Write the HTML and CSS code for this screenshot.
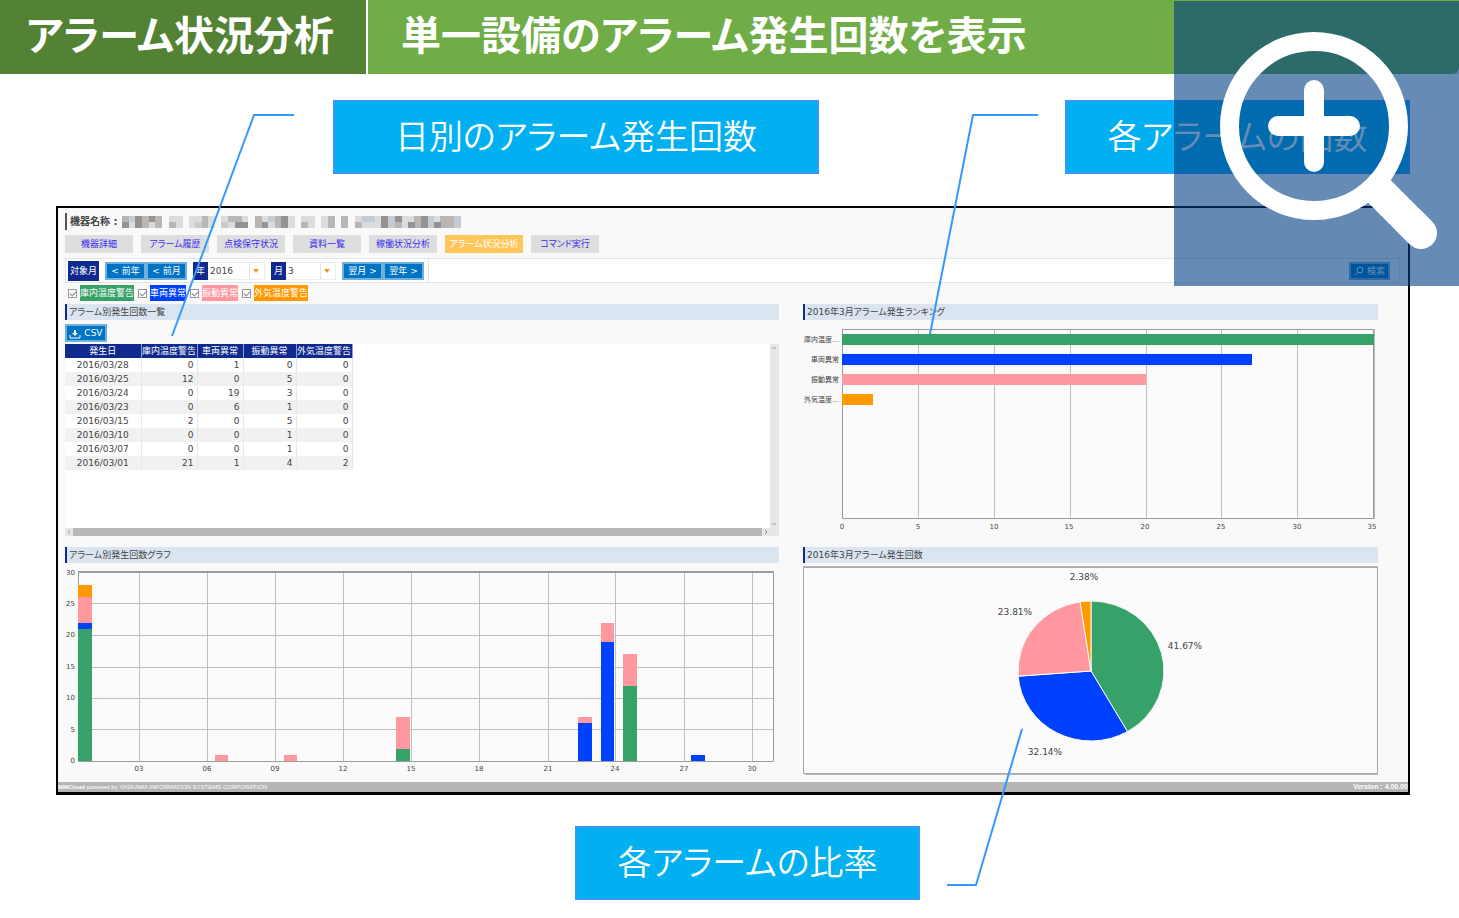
FILE: index.html
```html
<!DOCTYPE html>
<html lang="ja">
<head>
<meta charset="utf-8">
<title>アラーム状況分析</title>
<link rel="stylesheet" href="styles.css">
</head>
<body>
<div class="slide">
  <header class="banner">
    <h1 class="banner-title">アラーム状況分析</h1>
    <p class="banner-lead">単一設備のアラーム発生回数を表示</p>
  </header>

  <div class="callouts callouts-top">
    <p class="callout callout-wide">日別のアラーム発生回数</p>
    <p class="callout">各アラームの回数</p>
  </div>

  <main class="app">
    <div class="device">
      <h2 class="device-label">機器名称 :</h2>
      <svg class="mosaic" viewBox="0 0 340 12" width="340" height="12" aria-hidden="true">
        <path fill="#dcdcdc" d="M0 0h40v12H0zM47 0h14v12H47zM67 0h26v12H67zM99 0h27v12H99zM133 0h40v12h-40zM179 0h14v12h-14zM199 0h14v12h-14zM219 0h7v12h-7zM233 0h106v12H233z"/>
        <path fill="#b9b6b3" d="M0 0h7v12H0zM20 0h7v12h-7zM33 0h7v12h-7zM47 6h7v6h-7zM80 0h6v12h-6zM106 0h14v6h-14zM133 0h7v12h-7zM153 0h6v12h-6zM179 6h7v6h-7zM206 0h7v12h-7zM219 0h7v12h-7zM233 6h7v6h-7zM273 0h7v12h-7zM292 0h7v12h-7zM318 0h14v12h-14z"/>
        <path fill="#949391" d="M0 6h7v6H0zM13 0h7v12h-7zM27 0h6v6h-6zM113 6h13v6h-13zM140 6h6v6h-6zM159 0h7v12h-7zM259 0h7v12h-7zM273 0h7v6h-7zM286 6h7v6h-7zM299 0h7v12h-7zM312 6h7v6h-7z"/>
        <path fill="#c5cbd3" d="M7 0h6v6H7zM73 6h7v6h-7zM99 6h7v6h-7zM146 0h7v6h-7zM240 0h13v6h-13zM266 0h7v12h-7zM306 0h6v12h-6zM332 0h7v12h-7z"/>
      </svg>
    </div>

    <nav class="tabs">
      <a class="tab" href="#">機器詳細</a>
      <a class="tab" href="#">アラーム履歴</a>
      <a class="tab" href="#">点検保守状況</a>
      <a class="tab" href="#">資料一覧</a>
      <a class="tab" href="#">稼働状況分析</a>
      <a class="tab tab-active" href="#">アラーム状況分析</a>
      <a class="tab" href="#">コマンド実行</a>
    </nav>

    <form class="toolbar">
      <div class="period">
        <span class="tag tag-tall">対象月</span>
        <span class="pair">
          <button class="btn" type="button">&lt; 前年</button>
          <button class="btn" type="button">&lt; 前月</button>
        </span>
        <span class="field">
          <label class="tag" for="year">年</label>
          <span class="picker"><select id="year"><option>2016</option></select></span>
        </span>
        <span class="field">
          <label class="tag" for="month">月</label>
          <span class="picker picker-short"><select id="month"><option>3</option></select></span>
        </span>
        <span class="pair">
          <button class="btn" type="button">翌月 &gt;</button>
          <button class="btn" type="button">翌年 &gt;</button>
        </span>
      </div>
      <button class="btn btn-search" type="button">
        <svg viewBox="0 0 10 10" width="10" height="10" aria-hidden="true"><path d="M3.6 6.4L1 9.2M3 4a3 3 0 1 1 6 0a3 3 0 0 1-6 0" fill="none" stroke="#fff" stroke-width="1"/></svg>
        検索
      </button>
    </form>

    <div class="filters">
      <input class="check" type="checkbox" id="f1" checked><label class="chip green" for="f1">庫内温度警告</label>
      <input class="check" type="checkbox" id="f2" checked><label class="chip blue" for="f2">車両異常</label>
      <input class="check" type="checkbox" id="f3" checked><label class="chip pink" for="f3">振動異常</label>
      <input class="check" type="checkbox" id="f4" checked><label class="chip orange" for="f4">外気温度警告</label>
    </div>

    <div class="panels">
      <section class="panel">
        <h3 class="panel-title">アラーム別発生回数一覧</h3>
        <button class="btn btn-csv" type="button">
          <svg viewBox="0 0 12 10" width="12" height="10" aria-hidden="true"><path d="M1 6v3h10V6" fill="none" stroke="#fff"/><path d="M5 1h2v3h2L6 7L3 4h2z" fill="#fff"/></svg>
          CSV
        </button>
        <div class="list">
          <div class="list-body">
            <table class="log">
              <colgroup><col class="c-day"><col class="c-a"><col class="c-b"><col class="c-c"><col class="c-d"></colgroup>
              <thead><tr><th>発生日</th><th>庫内温度警告</th><th>車両異常</th><th>振動異常</th><th>外気温度警告</th></tr></thead>
              <tbody>
                <tr><td>2016/03/28</td><td>0</td><td>1</td><td>0</td><td>0</td></tr>
                <tr><td>2016/03/25</td><td>12</td><td>0</td><td>5</td><td>0</td></tr>
                <tr><td>2016/03/24</td><td>0</td><td>19</td><td>3</td><td>0</td></tr>
                <tr><td>2016/03/23</td><td>0</td><td>6</td><td>1</td><td>0</td></tr>
                <tr><td>2016/03/15</td><td>2</td><td>0</td><td>5</td><td>0</td></tr>
                <tr><td>2016/03/10</td><td>0</td><td>0</td><td>1</td><td>0</td></tr>
                <tr><td>2016/03/07</td><td>0</td><td>0</td><td>1</td><td>0</td></tr>
                <tr><td>2016/03/01</td><td>21</td><td>1</td><td>4</td><td>2</td></tr>
              </tbody>
            </table>
          </div>
          <div class="vbar">
            <svg viewBox="0 0 8 8" width="8" height="8" aria-hidden="true"><path d="M2 5l2-2l2 2" fill="none" stroke="#aaa"/></svg>
            <svg viewBox="0 0 8 8" width="8" height="8" aria-hidden="true"><path d="M2 3l2 2l2-2" fill="none" stroke="#aaa"/></svg>
          </div>
          <div class="hbar">
            <svg viewBox="0 0 8 8" width="8" height="8" aria-hidden="true"><path d="M5 2L3 4l2 2" fill="none" stroke="#aaa"/></svg>
            <span class="thumb"></span>
            <svg viewBox="0 0 8 8" width="8" height="8" aria-hidden="true"><path d="M3 2l2 2l-2 2" fill="none" stroke="#888"/></svg>
          </div>
        </div>
      </section>

      <section class="panel">
        <h3 class="panel-title">2016年3月アラーム発生ランキング</h3>
        <svg class="chart chart-rank" viewBox="0 0 575 212">
          <rect x="39" y="5" width="532" height="190" fill="#fbfbfb"/>
          <path class="grid" d="M115.500 5v190M191.500 5v190M267.500 5v190M343.500 5v190M418.500 5v190M494.500 5v190"/>
          <path class="frame" d="M39.500 5.500h531v189h-531z"/>
          <path class="shade" d="M571.500 5v190"/>
          <rect class="f-green" x="39" y="10" width="532" height="11"/>
          <rect class="f-blue" x="39" y="30" width="410" height="11"/>
          <rect class="f-pink" x="39" y="50" width="304" height="11"/>
          <rect class="f-orange" x="39" y="70" width="31" height="11"/>
          <g class="axis end">
            <text x="36" y="18">庫内温度…</text>
            <text x="36" y="38">車両異常</text>
            <text x="36" y="58">振動異常</text>
            <text x="36" y="78">外気温度…</text>
          </g>
          <g class="axis mid">
            <text x="39" y="205">0</text><text x="115" y="205">5</text><text x="191" y="205">10</text><text x="266" y="205">15</text><text x="342" y="205">20</text><text x="418" y="205">25</text><text x="494" y="205">30</text><text x="569" y="205">35</text>
          </g>
        </svg>
      </section>

      <section class="panel">
        <h3 class="panel-title">アラーム別発生回数グラフ</h3>
        <svg class="chart" viewBox="0 0 714 213">
          <rect x="13" y="9" width="695" height="189" fill="#fbfbfb"/>
          <path class="grid" d="M13 40.500h695M13 72.500h695M13 104.500h695M13 135.500h695M13 166.500h695M74.500 9v189M142.500 9v189M210.500 9v189M278.500 9v189M346.500 9v189M414.500 9v189M483.500 9v189M550.500 9v189M619.500 9v189M687.500 9v189"/>
          <path class="frame" d="M13.500 9.500h695v189h-695zM13 8.500h696"/>
          <path class="f-orange" d="M13 22h14v12H13z"/>
          <path class="f-pink" d="M13 34h14v26H13zM150 192h13v6h-13zM219 192h13v6h-13zM331 154h14v32h-14zM513 154h14v6h-14zM536 60h13v19h-13zM558 91h14v32h-14z"/>
          <path class="f-blue" d="M13 60h14v6H13zM513 160h14v38h-14zM536 79h13v119h-13zM626 192h14v6h-14z"/>
          <path class="f-green" d="M13 66h14v132H13zM331 186h14v12h-14zM558 123h14v75h-14z"/>
          <g class="axis end">
            <text x="10" y="12">30</text><text x="10" y="43">25</text><text x="10" y="74">20</text><text x="10" y="106">15</text><text x="10" y="137">10</text><text x="10" y="169">5</text><text x="10" y="200">0</text>
          </g>
          <g class="axis mid">
            <text x="74" y="208">03</text><text x="142" y="208">06</text><text x="210" y="208">09</text><text x="278" y="208">12</text><text x="346" y="208">15</text><text x="414" y="208">18</text><text x="483" y="208">21</text><text x="550" y="208">24</text><text x="619" y="208">27</text><text x="687" y="208">30</text>
          </g>
        </svg>
      </section>

      <section class="panel">
        <h3 class="panel-title">2016年3月アラーム発生回数</h3>
        <svg class="chart" viewBox="0 0 575 213">
          <rect x="0.500" y="4.500" width="574" height="206" fill="#fbfbfb" stroke="#a9a9a9"/>
          <path class="shade" d="M0 3.500h575M2 211.500h573"/>
          <g stroke="#fbfbfb" stroke-width="1">
            <path class="f-green" d="M288 108V38A73 70 0 0 1 324.500 168.600z"/>
            <path class="f-blue" d="M288 108L324.500 168.600A73 70 0 0 1 215.200 113.200z"/>
            <path class="f-pink" d="M288 108L215.200 113.200A73 70 0 0 1 277.100 38.800z"/>
            <path class="f-orange" d="M288 108L277.100 38.800A73 70 0 0 1 288 38z"/>
          </g>
          <g class="share mid">
            <text x="281" y="17">2.38%</text>
            <text x="212" y="52">23.81%</text>
            <text x="382" y="86">41.67%</text>
            <text x="242" y="192">32.14%</text>
          </g>
        </svg>
      </section>
    </div>

    <footer class="foot">
      <span><b>MMCloud</b> powered by YASKAWA INFORMATION SYSTEMS CORPORATION</span>
      <b class="version">Version : 4.00.00</b>
    </footer>
  </main>

  <div class="callouts callouts-bottom">
    <p class="callout">各アラームの比率</p>
  </div>

  <svg class="leaders" viewBox="0 0 1459 918" preserveAspectRatio="none" aria-hidden="true">
    <path d="M294 115H254L172 336M1038 115H973L930 334M1022 729L976 885H947"/>
  </svg>

  <button class="zoom" type="button" aria-label="拡大">
    <svg viewBox="0 0 285 285" aria-hidden="true">
      <g fill="none" stroke="#fff" stroke-linecap="round">
        <circle cx="140" cy="125" r="84.500" stroke-width="19"/>
        <path d="M104 125h72M140 89v72" stroke-width="20"/>
        <path d="M200 185L247 232" stroke-width="32" stroke-linecap="butt"/>
        <path d="M236 221L247 232" stroke-width="32"/>
      </g>
    </svg>
  </button>
</div>
</body>
</html>
```

FILE: styles.css
```css
* { box-sizing: border-box; }

body {
  margin: 0;
  background: #fff;
  font-family: "Noto Sans CJK JP", sans-serif;
  font-feature-settings: "palt";
}

h1, h2, h3, p { margin: 0; font-weight: inherit; }

button, select, input { font: inherit; font-feature-settings: inherit; margin: 0; }

.slide {
  position: relative;
  min-height: 918px;
  overflow: hidden;
}

/* Banner */
.banner {
  display: flex;
  gap: 2px;
  height: 74px;
  color: #fff;
  font-size: 40px;
  font-weight: 700;
  line-height: 66px;
  white-space: nowrap;
}
.banner-title { width: 366px; padding-left: 26px; background: #548235; font-size: 40px; font-weight: 700; }
.banner-lead { flex: 1; padding-left: 33px; background: #70ad47; border-bottom-right-radius: 6px; }

/* Callouts */
.callouts { display: flex; }
.callouts-top { justify-content: space-between; padding: 26px 49px 32px 333px; }
.callouts-bottom { justify-content: center; padding: 31px 0 18px 36px; }
.callout {
  width: 345px;
  height: 74px;
  border: 2px solid #3399ff;
  background: #00b0f0;
  color: #fff;
  font-size: 34px;
  font-weight: 350;
  line-height: 66px;
  text-align: center;
  white-space: nowrap;
}
.callout-wide { width: 486px; }

.leaders {
  position: absolute;
  inset: 0;
  width: 100%;
  height: 918px;
  pointer-events: none;
}
.leaders path { fill: none; stroke: #3399ff; stroke-width: 2; }

.zoom {
  position: absolute;
  top: 1px;
  right: 0;
  width: 285px;
  padding: 0;
  border: 0;
  background: rgba(0, 64, 132, 0.6);
}
.zoom svg { display: block; width: 100%; }

/* Application window */
.app {
  margin: 0 49px 0 56px;
  border: 2px solid #000;
  border-bottom-width: 3px;
  background: #f9f9f9;
  color: #444;
  font-family: "DejaVu Sans", "Noto Sans CJK JP", sans-serif;
  font-size: 9px;
  line-height: 14px;
  white-space: nowrap;
}

.device { display: flex; align-items: center; gap: 5px; margin: 5px 7px; height: 17px; border-left: 2px solid #555; }
.device-label { padding-left: 3px; font-size: 10px; font-weight: 700; }

.tabs { display: flex; gap: 8px; padding: 0 7px; }
.tab {
  min-width: 68px;
  height: 18px;
  padding: 0 4px;
  background: #dedede;
  color: #3a2cf0;
  line-height: 18px;
  text-align: center;
  text-decoration: none;
}
.tab-active { min-width: 78px; background: #ffc65c; color: #fff; }

.toolbar {
  display: flex;
  justify-content: space-between;
  align-items: center;
  height: 25px;
  margin: 5px 8px 0 7px;
  border: 1px solid #e4e4e4;
  background: #fff;
}
.period {
  display: flex;
  align-items: center;
  gap: 6px;
  height: 23px;
  padding: 0 4px 0 2px;
  border-right: 1px solid #e4e4e4;
}
.pair { display: flex; }
.field { display: flex; }
.tag { padding: 0 3px; background: #10298e; color: #fff; line-height: 18px; }
.tag-tall { padding: 0 2px; line-height: 20px; }

.btn {
  min-width: 41px;
  height: 18px;
  padding: 0 1px;
  border: 2px solid #6fb0dc;
  background: #0073c4;
  color: #fff;
  line-height: 14px;
  text-align: center;
  white-space: nowrap;
}
.btn svg { vertical-align: middle; }
.btn-search { margin-right: 9px; }
.btn-csv { display: block; width: 42px; margin-top: 4px; }

.picker {
  position: relative;
  display: flex;
  align-items: center;
  width: 57px;
  border: 1px solid #eee;
  border-left: 0;
}
.picker-short { width: 50px; }
.picker::after {
  content: "";
  position: absolute;
  right: 5px;
  border: 3px solid transparent;
  border-top: 4px solid #f0962a;
  border-bottom: 0;
  pointer-events: none;
}
.picker select {
  appearance: none;
  width: 100%;
  height: 16px;
  padding: 0 2px;
  border: 0;
  background: linear-gradient(#e4e4e4, #e4e4e4) right 14px top 0 / 1px 100% no-repeat #fff;
  color: #444;
}

.filters { display: flex; align-items: center; padding: 2px 10px; height: 20px; }
.check {
  appearance: none;
  width: 9px;
  height: 9px;
  border: 1px solid #999;
  background: #fff;
}
.check:checked::before {
  content: "";
  display: block;
  width: 5px;
  height: 3px;
  margin: 1px;
  border: solid #888;
  border-width: 0 0 1px 1px;
  transform: rotate(-45deg);
}
.chip { margin: 0 4px 0 3px; color: #fff; line-height: 16px; }
.green { background: #36a269; }
.blue { background: #0040ff; }
.pink { background: #ff999f; }
.orange { background: #ff9900; }

/* Panels */
.panels {
  display: grid;
  grid-template-columns: 714fr 575fr;
  column-gap: 24px;
  row-gap: 11px;
  padding: 1px 30px 6px 7px;
}
.panel { min-width: 0; }
.panel-title {
  height: 16px;
  padding-left: 2px;
  border-left: 2px solid #10298e;
  background: #dbe5f1;
  font-size: 9px;
  line-height: 16px;
}

.list {
  display: grid;
  grid-template-columns: 1fr 9px;
  grid-template-rows: 184px 8px;
  margin-top: 2px;
  background: #e6e6e6;
}
.list-body { background: #fff; }
.vbar { display: flex; flex-direction: column; justify-content: space-between; }
.hbar { display: flex; }
.thumb { flex: 1; background: #b7b7b7; }

.log { width: 287px; table-layout: fixed; border-collapse: collapse; }
.c-day { width: 76px; }
.c-a { width: 56px; }
.c-b { width: 46px; }
.c-c { width: 53px; }
.c-d { width: 56px; }
.log th, .log td { height: 14px; padding: 0; line-height: 13px; }
.log th { background: #10298e; color: #fff; font-weight: 400; border-right: 1px solid #8d9bd0; }
.log td { padding-right: 3px; text-align: right; border-right: 1px solid #e8e8e8; }
.log td:first-child { padding: 0; text-align: center; }
.log tbody tr:nth-child(even) { background: #f1f1f1; }

/* Charts */
.chart { display: block; width: 100%; height: auto; overflow: visible; }
.chart-rank { margin-top: 4px; margin-bottom: -1px; }
.chart text { fill: #444; }
.grid { fill: none; stroke: #c0c0c0; }
.frame { fill: none; stroke: #9c9c9c; }
.shade { fill: none; stroke: #b9b9b9; }
.f-green { fill: #36a269; }
.f-blue { fill: #0040ff; }
.f-pink { fill: #ff999f; }
.f-orange { fill: #ff9900; }
.axis { font-size: 7px; }
.share { font-size: 9px; }
.end { text-anchor: end; }
.mid { text-anchor: middle; }

.foot {
  display: flex;
  justify-content: space-between;
  height: 10px;
  background: #b5b5b5;
  color: #fff;
  font-family: "Liberation Sans", sans-serif;
  font-size: 6px;
  line-height: 10px;
}
.version { font-size: 7px; }
```
